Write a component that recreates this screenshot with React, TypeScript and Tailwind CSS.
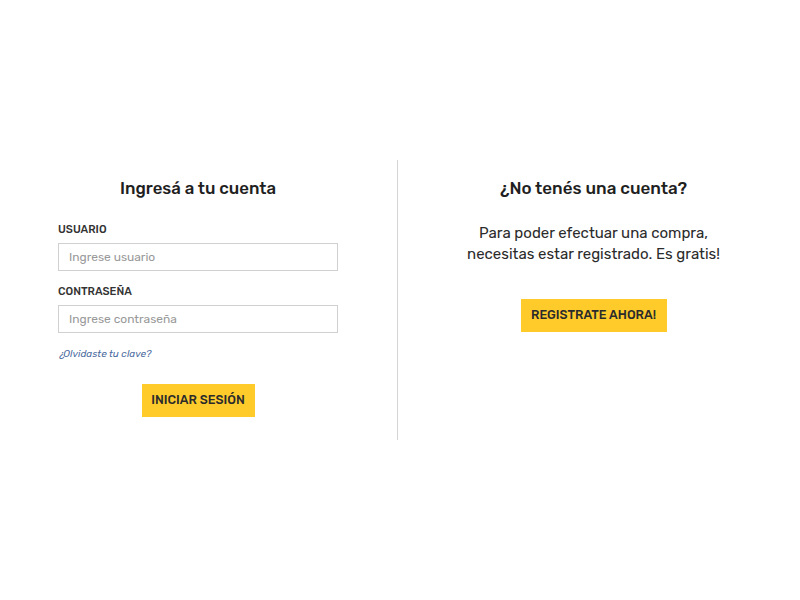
import React from "react";

const font = { fontFamily: "Rubik, Inter, 'Noto Sans', sans-serif" };

export default function App() {
  return (
    <div className="min-h-[600px] w-[800px] bg-white pt-[160px]" style={font}>
      <div className="flex">
        {/* login */}
        <div className="w-[398px] h-[280px] border-r border-[#d4d4d4] pl-[58px] pt-[18px]">
          <div className="w-[280px]">
            <h2 className="text-center text-[16.8px] leading-[20px] font-medium text-[#1f1f1f]">
              Ingresá a tu cuenta
            </h2>
            <label className="block mt-[25px] text-[11px] leading-[14px] font-medium text-[#333]">USUARIO</label>
            <input
              className="mt-[6px] block w-full h-[28px] border border-[#d0d0d0] px-[10px] text-[12px] text-[#333] placeholder:text-[#999] outline-none"
              placeholder="Ingrese usuario"
            />
            <label className="block mt-[14px] text-[11px] leading-[14px] font-medium text-[#333]">CONTRASEÑA</label>
            <input
              type="password"
              className="mt-[6px] block w-full h-[28px] border border-[#d0d0d0] px-[10px] text-[12px] text-[#333] placeholder:text-[#999] outline-none"
              placeholder="Ingrese contraseña"
            />
            <a className="block mt-[14px] text-[10px] leading-[14px] italic text-[#4a6aa0]">¿Olvidaste tu clave?</a>
            <div className="flex justify-center mt-[23px]">
              <button className="w-[113px] h-[33px] bg-[#ffcb2b] text-[12.5px] font-medium text-[#2b2b2b]">
                INICIAR SESIÓN
              </button>
            </div>
          </div>
        </div>
        {/* register */}
        <div className="w-[391px] pt-[18px] flex flex-col items-center">
          <h2 className="text-center text-[17px] leading-[20px] font-medium text-[#1f1f1f]">
            ¿No tenés una cuenta?
          </h2>
          <p className="mt-[25px] text-center text-[15px] leading-[21px] text-[#2b2b2b]">
            Para poder efectuar una compra,
            <br />
            necesitas estar registrado. Es gratis!
          </p>
          <button className="mt-[34px] w-[146px] h-[33px] bg-[#ffcb2b] text-[12.5px] font-medium text-[#2b2b2b]">
            REGISTRATE AHORA!
          </button>
        </div>
      </div>
    </div>
  );
}
